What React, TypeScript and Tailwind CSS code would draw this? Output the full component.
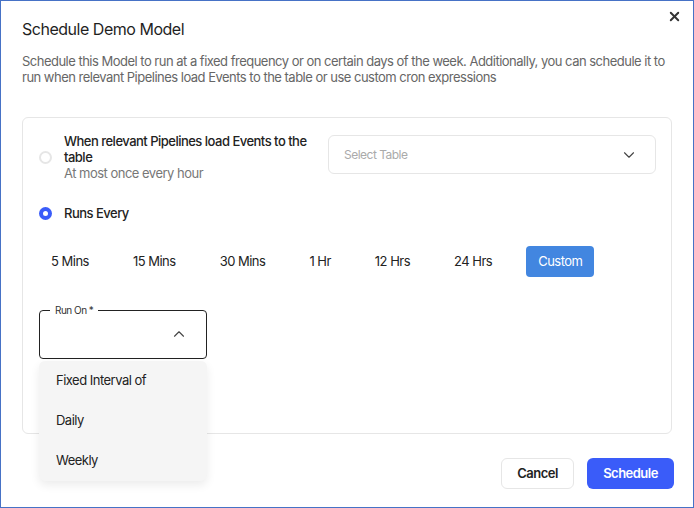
import { ChevronDown, ChevronUp, X } from "lucide-react";

const intervals = ["5 Mins", "15 Mins", "30 Mins", "1 Hr", "12 Hrs", "24 Hrs"];
const runOnOptions = ["Fixed Interval of", "Daily", "Weekly"];

export default function App() {
  return (
    <div
      className="relative flex h-[508px] w-[694px] flex-col border border-[#4672c6] bg-white px-[21px] tracking-[-0.032em] text-[#222]"
      style={{ fontFamily: "Inter, 'Noto Sans', sans-serif" }}
    >
      <button className="absolute right-[11px] top-[8px] text-[#333]">
        <X size={15} strokeWidth={3} />
      </button>

      <h1 className="mt-[16px] text-[16px] leading-6 tracking-[-0.03em] text-[#1f1f1f]">Schedule Demo Model</h1>
      <p className="mt-[12px] text-[13px] leading-4 text-[#666]">
        Schedule this Model to run at a fixed frequency or on certain days of the week. Additionally, you can schedule it to run
        when relevant Pipelines load Events to the table or use custom cron expressions
      </p>

      <div className="mt-[32px] h-[317px] rounded-md border border-[#e6e6e6] p-4 pt-[15px]">
        <div className="flex items-start">
          <label className="flex w-[290px] items-center gap-[12px]">
            <span className="h-[13px] w-[13px] shrink-0 rounded-full border-2 border-[#e6e6e6]" />
            <span className="w-[254px] text-[13px] leading-4">
              <span className="font-medium text-[#222]">When relevant Pipelines load Events to the table</span>
              <span className="block text-[#777]">At most once every hour</span>
            </span>
          </label>
          <div className="ml-[-1px] mr-[-1px] mt-[2px] flex h-[39px] flex-1 items-center justify-between rounded-md border border-[#e6e6e6] pl-[15px] pr-[17px]">
            <span className="text-[12px] text-[#aaa]">Select Table</span>
            <ChevronDown size={18} strokeWidth={1.5} className="text-[#444]" />
          </div>
        </div>

        <label className="mt-[24px] flex items-center gap-[12px]">
          <span className="flex h-[13px] w-[13px] shrink-0 items-center justify-center rounded-full bg-[#3a5cf9]">
            <span className="h-[5px] w-[5px] rounded-full bg-white" />
          </span>
          <span className="text-[13px] font-medium leading-4">Runs Every</span>
        </label>

        <div className="mt-[25px] flex items-center gap-5">
          {intervals.map((label) => (
            <button key={label} className="h-[31px] rounded px-3 text-[13px] text-[#222]">
              {label}
            </button>
          ))}
          <button className="ml-[2px] h-[31px] rounded bg-[#4286e0] px-3 text-[13px] text-white">Custom</button>
        </div>

        <div className="relative mt-[27px] w-[168px]">
          <fieldset className="flex h-[55px] items-center justify-end rounded border border-[#222] pb-[6px] pl-[10px] pr-[18px]">
            <legend className="px-[5px] text-[10px] leading-3 text-[#333]">Run On *</legend>
            <ChevronUp size={18} strokeWidth={1.5} className="text-[#444]" />
          </fieldset>
          <div className="absolute left-0 top-[57px] z-10 w-[168px] rounded-md bg-[#f5f5f5] shadow-[0_4px_10px_rgba(0,0,0,0.08)]">
            {runOnOptions.map((opt) => (
              <div key={opt} className="flex h-10 items-center px-[17px] text-[13px] text-[#222]">
                {opt}
              </div>
            ))}
          </div>
        </div>
      </div>

      <div className="mr-[-2px] mt-[24px] flex justify-end gap-[13px]">
        <button className="h-[31px] w-[73px] rounded-md border border-[#e6e6e6] text-[13px] font-semibold text-[#222]">
          Cancel
        </button>
        <button className="h-[31px] w-[87px] rounded-md bg-[#3a5cf9] text-[13px] font-semibold text-white">Schedule</button>
      </div>
    </div>
  );
}
